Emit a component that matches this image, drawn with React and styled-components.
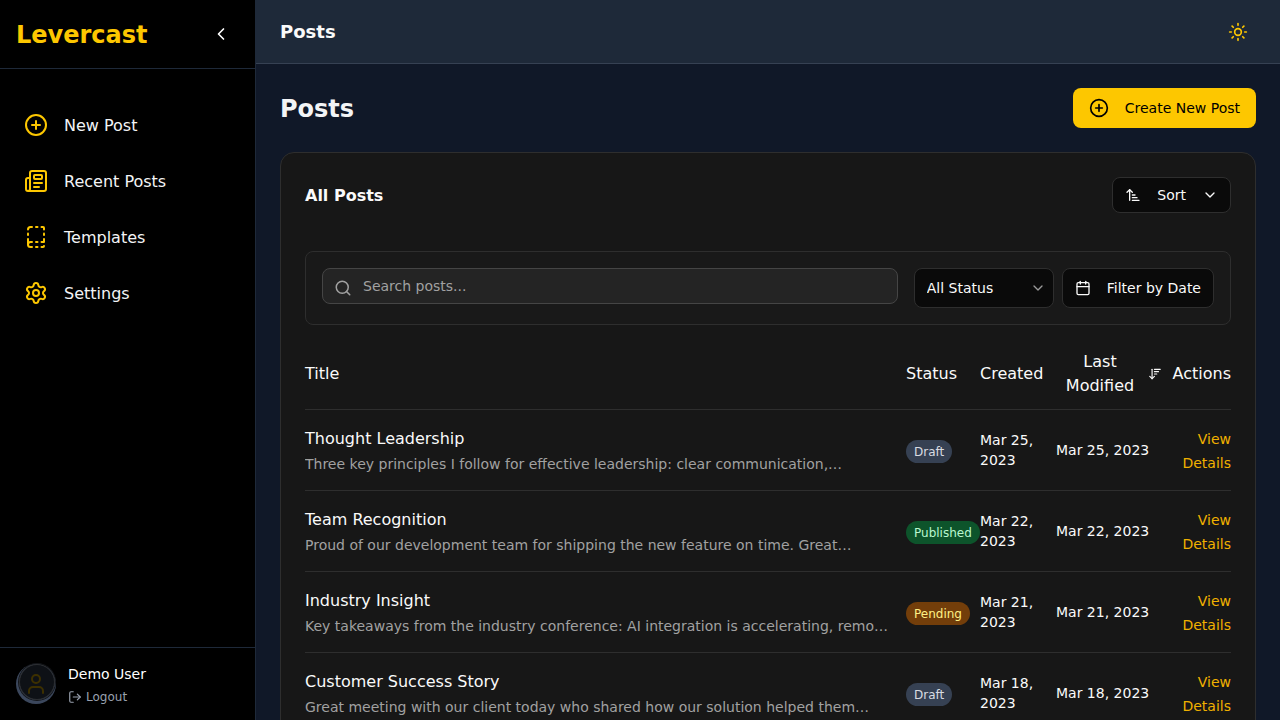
import React from 'react';
import styled, { createGlobalStyle, css } from 'styled-components';
import {
  CirclePlus, Newspaper, BookDashed, Settings, ChevronLeft, ChevronDown, Sun,
  Search, Calendar, ArrowUpNarrowWide, ArrowDownWideNarrow, LogOut, User,
} from 'lucide-react';

const Global = createGlobalStyle`
  *, *::before, *::after { box-sizing: border-box; }
  body {
    margin: 0;
    background: #101828;
    color: #fafafa;
    font-family: "DejaVu Sans", sans-serif;
    font-size: 16px;
    line-height: 24px;
  }
  button, input, select { font: inherit; color: inherit; }
  button { cursor: pointer; }
  h1, h2, p, ul { margin: 0; padding: 0; }
  a { text-decoration: none; }
`;

const Shell = styled.div`
  display: flex;
  height: 100vh;
  overflow: hidden;
`;

const Sidebar = styled.aside`
  display: flex;
  flex-direction: column;
  flex: 0 0 256px;
  background: #000;
  border-right: 1px solid #1e2939;
`;

const Brand = styled.div`
  display: flex;
  align-items: center;
  justify-content: space-between;
  padding: 16px;
  border-bottom: 1px solid #1e2939;
`;

const BrandName = styled.span`
  padding-top: 2px;
  font-size: 24px;
  line-height: 32px;
  font-weight: 700;
  color: #fdc700;
`;

const IconButton = styled.button`
  display: flex;
  align-items: center;
  justify-content: center;
  width: 36px;
  height: 36px;
  padding: 0;
  border: 0;
  border-radius: 8px;
  background: transparent;
  color: ${(p) => p.$color || '#fff'};
`;

const Nav = styled.nav`
  flex: 1;
  padding: 32px 8px;
`;

const NavList = styled.ul`
  display: flex;
  flex-direction: column;
  gap: 8px;
  list-style: none;
`;

const NavLink = styled.a`
  display: flex;
  align-items: center;
  gap: 16px;
  height: 48px;
  padding: 0 16px;
  border-radius: 8px;
  color: #f3f4f6;
  line-height: 25px;
  svg { color: #fdc700; }
`;

const Account = styled.div`
  display: flex;
  align-items: flex-start;
  gap: 12px;
  padding: 16px 16px 15px;
  border-top: 1px solid #1e2939;
`;

const Avatar = styled.div`
  position: relative;
  display: flex;
  align-items: center;
  justify-content: center;
  width: 40px;
  height: 40px;
  border-radius: 50%;
  background: #3b475c;
  color: #fdc700;
`;

const AvatarVeil = styled.div`
  position: absolute;
  top: 0;
  right: 1px;
  width: 36px;
  height: 36px;
  border: 1px solid #2c2e31;
  border-radius: 50%;
  background: rgba(0, 0, 0, 0.76);
  box-shadow: 0 0 0 1px #14161a;
`;

const AccountName = styled.p`
  font-size: 14px;
  line-height: 20px;
  color: #fff;
`;

const LogoutButton = styled.button`
  display: flex;
  align-items: center;
  gap: 4px;
  margin-top: 5px;
  padding: 0;
  border: 0;
  background: none;
  font-size: 12px;
  line-height: 16px;
  color: #99a1af;
`;

const Page = styled.div`
  display: flex;
  flex: 1;
  flex-direction: column;
  min-width: 0;
`;

const TopBar = styled.header`
  display: flex;
  flex: none;
  align-items: center;
  justify-content: space-between;
  height: 64px;
  padding: 0 24px;
  background: #1e2939;
  border-bottom: 1px solid #364153;
`;

const TopTitle = styled.span`
  font-size: 18px;
  line-height: 28px;
  font-weight: 600;
`;

const Content = styled.main`
  flex: 1;
  min-height: 0;
  padding: 24px;
  overflow-y: auto;
  scrollbar-width: none;
`;

const PageHead = styled.div`
  display: flex;
  align-items: center;
  justify-content: space-between;
  margin-bottom: 24px;
`;

const PageTitle = styled.h1`
  padding-top: 2px;
  font-size: 24px;
  line-height: 32px;
  font-weight: 700;
  color: #f3f4f6;
`;

const CreateButton = styled.button`
  display: flex;
  align-items: center;
  gap: 16px;
  height: 40px;
  padding: 0 16px;
  border: 0;
  border-radius: 8px;
  background: #fdc700;
  color: #000;
  font-size: 14px;
  line-height: 20px;
`;

const Card = styled.section`
  padding: 24px;
  border: 1px solid #2e2e2e;
  border-radius: 14px;
  background: #171717;
`;

const CardHead = styled.div`
  display: flex;
  align-items: center;
  justify-content: space-between;
  margin-bottom: 38px;
`;

const CardTitle = styled.h2`
  font-size: 16px;
  line-height: 25px;
  font-weight: 600;
`;

const control = css`
  height: ${(p) => (p.$compact ? '36px' : '40px')};
  border: 1px solid #2e2e2e;
  border-radius: 8px;
  background: #0a0a0a;
  font-size: 14px;
  line-height: 20px;
`;

const DarkButton = styled.button`
  ${control}
  display: flex;
  align-items: center;
  gap: 16px;
  padding: 0 12px;
  white-space: nowrap;
`;

const Filters = styled.div`
  display: flex;
  align-items: flex-start;
  gap: 16px;
  margin-bottom: 24px;
  padding: 16px;
  border: 1px solid #2e2e2e;
  border-radius: 8px;
  background: #191919;
`;

const SearchField = styled.label`
  display: flex;
  flex: 1;
  align-items: center;
  gap: 11px;
  height: 36px;
  padding: 0 11px;
  border: 1px solid #454545;
  border-radius: 8px;
  background: #242424;
  svg { flex: none; margin-top: 4px; color: #a1a1a1; }
`;

const SearchInput = styled.input`
  flex: 1;
  min-width: 0;
  height: 20px;
  padding: 0;
  border: 0;
  outline: 0;
  background: transparent;
  font-size: 14px;
  &::placeholder { color: #a1a1a1; opacity: 1; }
`;

const FilterActions = styled.div`
  display: flex;
  gap: 8px;
`;

const SelectWrap = styled.div`
  position: relative;
  svg {
    position: absolute;
    top: 12px;
    right: 8px;
    color: #9a9a9a;
    pointer-events: none;
  }
`;

const StatusSelect = styled.select`
  ${control}
  width: 140px;
  padding: 0 12px;
  appearance: none;
`;

const Table = styled.table`
  width: 100%;
  border-collapse: collapse;
  table-layout: fixed;
`;

const HeadCell = styled.th`
  width: ${(p) => p.$width || 'auto'};
  padding: 1px 0 11px;
  border-bottom: 1px solid #2e2e2e;
  font-weight: 400;
  text-align: ${(p) => p.$align || 'left'};
  white-space: nowrap;
`;

const SortHeader = styled.button`
  display: flex;
  align-items: center;
  gap: 4px;
  width: 106px;
  padding: 0;
  border: 0;
  background: none;
  line-height: 24px;
  text-align: center;
  span { flex: 1; white-space: normal; }
  svg { flex: none; }
`;

const Cell = styled.td`
  height: 81px;
  padding: 0;
  border-bottom: 1px solid #2e2e2e;
  font-size: 14px;
  line-height: 20px;
  text-align: ${(p) => p.$align || 'left'};
  white-space: ${(p) => (p.$wrap ? 'normal' : 'nowrap')};
`;

const PostTitle = styled.p`
  margin-bottom: 2px;
  font-size: 16px;
  line-height: 26px;
`;

const Excerpt = styled.p`
  padding-right: 16px;
  color: #a1a1a1;
  overflow: hidden;
  text-overflow: ellipsis;
`;

const tones = {
  Draft: ['#364153', '#d9dce2'],
  Published: ['#0d542b', '#b9f8cf'],
  Pending: ['#733e0a', '#fff085'],
};

const Badge = styled.span`
  display: inline-block;
  margin-top: 2px;
  padding: 5px 8px 3px;
  border-radius: 12px;
  background: ${(p) => tones[p.$status][0]};
  color: ${(p) => tones[p.$status][1]};
  font-size: 12px;
  line-height: 15px;
`;

const Details = styled.a`
  display: inline-block;
  width: 50px;
  padding-top: 2px;
  color: #f0b100;
  line-height: 24px;
`;

const navItems = [
  ['New Post', CirclePlus],
  ['Recent Posts', Newspaper],
  ['Templates', BookDashed],
  ['Settings', Settings],
];

const posts = [
  ['Thought Leadership', 'Three key principles I follow for effective leadership: clear communication,…', 'Draft', 'Mar 25, 2023'],
  ['Team Recognition', 'Proud of our development team for shipping the new feature on time. Great…', 'Published', 'Mar 22, 2023'],
  ['Industry Insight', 'Key takeaways from the industry conference: AI integration is accelerating, remo…', 'Pending', 'Mar 21, 2023'],
  ['Customer Success Story', 'Great meeting with our client today who shared how our solution helped them…', 'Draft', 'Mar 18, 2023'],
];

export default function App() {
  return (
    <>
      <Global />
      <Shell>
        <Sidebar>
          <Brand>
            <BrandName>Levercast</BrandName>
            <IconButton aria-label="Collapse sidebar"><ChevronLeft size={20} /></IconButton>
          </Brand>
          <Nav>
            <NavList>
              {navItems.map(([label, Icon]) => (
                <li key={label}>
                  <NavLink href="#"><Icon size={24} />{label}</NavLink>
                </li>
              ))}
            </NavList>
          </Nav>
          <Account>
            <Avatar>
              <User size={24} />
              <AvatarVeil />
            </Avatar>
            <div>
              <AccountName>Demo User</AccountName>
              <LogoutButton><LogOut size={14} />Logout</LogoutButton>
            </div>
          </Account>
        </Sidebar>
        <Page>
          <TopBar>
            <TopTitle>Posts</TopTitle>
            <IconButton aria-label="Toggle theme" $color="#fdc700"><Sun size={20} /></IconButton>
          </TopBar>
          <Content>
            <PageHead>
              <PageTitle>Posts</PageTitle>
              <CreateButton><CirclePlus size={20} />Create New Post</CreateButton>
            </PageHead>
            <Card>
              <CardHead>
                <CardTitle>All Posts</CardTitle>
                <DarkButton $compact>
                  <ArrowUpNarrowWide size={16} />Sort<ChevronDown size={16} />
                </DarkButton>
              </CardHead>
              <Filters>
                <SearchField>
                  <Search size={18} />
                  <SearchInput type="text" aria-label="Search posts" placeholder="Search posts..." />
                </SearchField>
                <FilterActions>
                  <SelectWrap>
                    <StatusSelect aria-label="Status" defaultValue="all">
                      <option value="all">All Status</option>
                    </StatusSelect>
                    <ChevronDown size={16} />
                  </SelectWrap>
                  <DarkButton><Calendar size={16} />Filter by Date</DarkButton>
                </FilterActions>
              </Filters>
              <Table>
                <thead>
                  <tr>
                    <HeadCell>Title</HeadCell>
                    <HeadCell $width="74px">Status</HeadCell>
                    <HeadCell $width="76px">Created</HeadCell>
                    <HeadCell $width="108px">
                      <SortHeader><span>Last Modified</span><ArrowDownWideNarrow size={14} /></SortHeader>
                    </HeadCell>
                    <HeadCell $width="67px" $align="right">Actions</HeadCell>
                  </tr>
                </thead>
                <tbody>
                  {posts.map(([title, excerpt, status, date]) => (
                    <tr key={title}>
                      <Cell>
                        <PostTitle>{title}</PostTitle>
                        <Excerpt>{excerpt}</Excerpt>
                      </Cell>
                      <Cell><Badge $status={status}>{status}</Badge></Cell>
                      <Cell $wrap>{date}</Cell>
                      <Cell>{date}</Cell>
                      <Cell $wrap $align="right"><Details href="#">View Details</Details></Cell>
                    </tr>
                  ))}
                </tbody>
              </Table>
            </Card>
          </Content>
        </Page>
      </Shell>
    </>
  );
}
